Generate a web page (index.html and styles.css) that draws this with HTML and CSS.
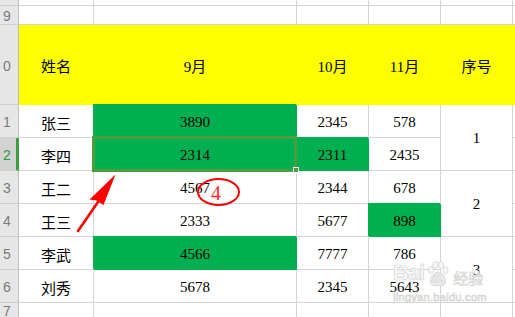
FILE: index.html
```html
<!DOCTYPE html>
<html lang="zh-CN">
<head>
<meta charset="utf-8">
<title>Sheet</title>
<link rel="stylesheet" href="styles.css">
</head>
<body>
<div class="sheet">
  <!-- row 8 (partly visible) -->
  <div class="rh"></div>
  <div class="c"></div><div class="c"></div><div class="c"></div><div class="c"></div><div class="c"></div><div class="c x"></div>
  <!-- row 9 -->
  <div class="rh">9</div>
  <div class="c"></div><div class="c"></div><div class="c"></div><div class="c"></div><div class="c"></div><div class="c x"></div>
  <!-- header row -->
  <div class="rh">0</div>
  <div class="c y">姓名</div>
  <div class="c y">9月</div>
  <div class="c y">10月</div>
  <div class="c y">11月</div>
  <div class="c y">序号</div>
  <div class="c y x"></div>
  <!-- data -->
  <div class="rh">1</div>
  <div class="c">张三</div>
  <div class="c g">3890</div>
  <div class="c">2345</div>
  <div class="c">578</div>
  <div class="c m">1</div>
  <div class="c x"></div>

  <div class="rh sel">2</div>
  <div class="c">李四</div>
  <div class="c g">2314</div>
  <div class="c g">2311</div>
  <div class="c">2435</div>
  <div class="c x"></div>

  <div class="rh">3</div>
  <div class="c">王二</div>
  <div class="c">4567</div>
  <div class="c">2344</div>
  <div class="c">678</div>
  <div class="c m">2</div>
  <div class="c x"></div>

  <div class="rh">4</div>
  <div class="c">王三</div>
  <div class="c">2333</div>
  <div class="c">5677</div>
  <div class="c g">898</div>
  <div class="c x"></div>

  <div class="rh">5</div>
  <div class="c">李武</div>
  <div class="c g">4566</div>
  <div class="c">7777</div>
  <div class="c">786</div>
  <div class="c m">3</div>
  <div class="c x"></div>

  <div class="rh">6</div>
  <div class="c">刘秀</div>
  <div class="c">5678</div>
  <div class="c">2345</div>
  <div class="c">5643</div>
  <div class="c x"></div>

  <div class="rh">7</div>
  <div class="c"></div><div class="c"></div><div class="c"></div><div class="c"></div><div class="c"></div><div class="c x"></div>

  <!-- overlays -->
  <div class="selection"></div>
  <div class="handle"></div>
  <div class="watermark">
    <div class="wm-top">
      <span class="wm-bai">Bai</span>
      <svg class="wm-paw" width="22" height="26" viewBox="0 0 22 26">
        <ellipse cx="4" cy="9" rx="2.6" ry="3.4" fill="#f7f7f7" stroke="#dadada" stroke-width="1"/>
        <ellipse cx="8.5" cy="4" rx="2.6" ry="3.4" fill="#f7f7f7" stroke="#dadada" stroke-width="1"/>
        <ellipse cx="14" cy="4" rx="2.6" ry="3.4" fill="#f7f7f7" stroke="#dadada" stroke-width="1"/>
        <ellipse cx="18.5" cy="9" rx="2.6" ry="3.4" fill="#f7f7f7" stroke="#dadada" stroke-width="1"/>
        <path d="M11 11 C7 11 4 17 3.5 20 C3 24 6 25 11 24.5 C16 25 19 24 18.5 20 C18 17 15 11 11 11 Z" fill="#ececec" stroke="#d6d6d6" stroke-width="1"/>
      </svg>
      <span class="wm-du">du</span>
      <span class="wm-jy">经验</span>
    </div>
    <div class="wm-url">jingyan.baidu.com</div>
  </div>
  <svg class="marks" width="515" height="317" viewBox="0 0 515 317">
    <ellipse cx="218.5" cy="192" rx="20.5" ry="13" fill="none" stroke="#ff0000" stroke-width="2"/>
    <line x1="78" y1="231" x2="98" y2="202" stroke="#ff0000" stroke-width="2.6" stroke-linecap="round"/>
    <polygon points="115.5,174.5 89.5,199.5 96.5,200.5 103.5,205" fill="#ff0000"/>
  </svg>
  <span class="note">4</span>
</div>
</body>
</html>
```

FILE: styles.css
```css
html, body {
  margin: 0;
  padding: 0;
  background: #ffffff;
}
body {
  width: 515px;
  height: 317px;
  overflow: hidden;
  font-family: "Liberation Serif", "Noto Sans CJK SC", serif;
  font-size: 15px;
  color: #000;
}
.sheet {
  position: relative;
  display: grid;
  grid-template-columns: 19px 75px 203px 72px 72px 72px 3px;
  grid-template-rows: 6px 19px 80px repeat(6, 33px) 15px;
  width: 515px;
  height: 317px;
}
.c {
  box-sizing: border-box;
  border-right: 1px solid #d4d4d4;
  border-bottom: 1px solid #d4d4d4;
  display: flex;
  align-items: center;
  justify-content: center;
  padding-top: 2px;
  white-space: nowrap;
}
.c.x {
  border-right: none;
}
.rh {
  box-sizing: border-box;
  background: #e6e6e6;
  border-right: 1px solid #bfbfbf;
  border-bottom: 1px solid #cfcfcf;
  font-family: "Liberation Sans", sans-serif;
  font-size: 14px;
  color: #7a7a7a;
  display: flex;
  align-items: center;
  padding-left: 3px;
  padding-top: 2px;
  overflow: hidden;
}
.rh.sel {
  background: #d3d3d3;
  color: #2f9a36;
  border-right: 3px solid #3f9f3f;
}
.y {
  background: #ffff00;
  border-right-color: #ffff00;
  border-bottom-color: #ffff00;
}
.g {
  background: #00b050;
  border-right-color: #00b050;
  border-bottom-color: #00b050;
  box-shadow: -1px -1px 0 0 #00b050;
}
.m {
  grid-row: span 2;
}
.selection {
  position: absolute;
  left: 92px;
  top: 136px;
  width: 205px;
  height: 36px;
  box-sizing: border-box;
  border: 3px solid #4a9e3c;
}
.handle {
  position: absolute;
  left: 293px;
  top: 167px;
  width: 6px;
  height: 6px;
  box-sizing: border-box;
  background: #4a9e3c;
  border: 1px solid #ffffff;
}
.marks {
  position: absolute;
  left: 0;
  top: 0;
  pointer-events: none;
}
.note {
  position: absolute;
  left: 211px;
  top: 183px;
  font-family: "Liberation Serif", serif;
  font-size: 20px;
  line-height: 1;
  color: #ff2a2a;
}
.watermark {
  position: absolute;
  left: 393px;
  top: 260px;
  display: flex;
  flex-direction: column;
  color: #f7f7f7;
  -webkit-text-stroke: 0.7px #d4d4d4;
  font-family: "Liberation Sans", "Noto Sans CJK SC", sans-serif;
}
.wm-top {
  display: flex;
  align-items: flex-end;
  height: 27px;
}
.wm-bai {
  font-size: 22px;
  font-weight: bold;
  line-height: 1;
  letter-spacing: -1px;
  margin-bottom: 3px;
}
.wm-paw {
  margin-left: 3px;
}
.wm-du {
  font-size: 12px;
  font-weight: bold;
  line-height: 1;
  margin-left: -19px;
  margin-bottom: 3px;
  width: 19px;
  color: #ffffff;
}
.wm-jy {
  font-size: 15px;
  line-height: 1;
  margin-left: 4px;
  margin-bottom: 1px;
}
.wm-url {
  font-size: 11px;
  line-height: 1;
  margin-top: 5px;
  letter-spacing: 0.3px;
}
```
